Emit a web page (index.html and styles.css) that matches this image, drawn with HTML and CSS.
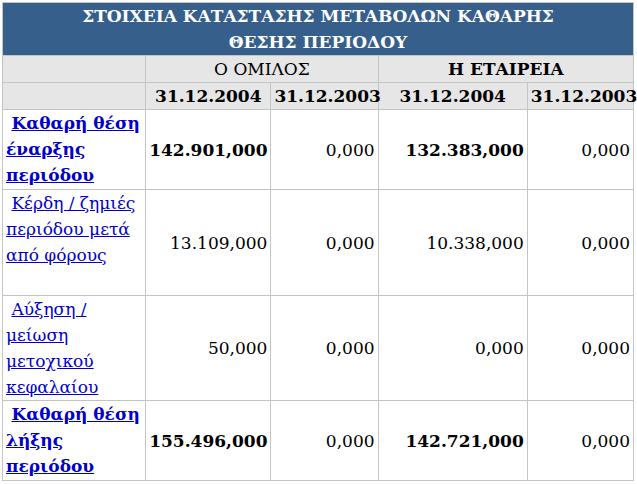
FILE: index.html
```html
<!DOCTYPE html>
<html lang="el">
<head>
<meta charset="utf-8">
<title>Κατάσταση μεταβολών</title>
<link rel="stylesheet" href="styles.css">
</head>
<body>
<table class="sheet">
  <colgroup>
    <col class="c-label">
    <col class="c-a">
    <col class="c-b">
    <col class="c-c">
    <col class="c-d">
  </colgroup>
  <tr class="title-row">
    <th colspan="5" class="title">ΣΤΟΙΧΕΙΑ ΚΑΤΑΣΤΑΣΗΣ ΜΕΤΑΒΟΛΩΝ ΚΑΘΑΡΗΣ<br>ΘΕΣΗΣ ΠΕΡΙΟΔΟΥ</th>
  </tr>
  <tr class="group-row">
    <td class="blank"></td>
    <td colspan="2" class="group">Ο ΟΜΙΛΟΣ</td>
    <td colspan="2" class="group strong">Η ΕΤΑΙΡΕΙΑ</td>
  </tr>
  <tr class="date-row">
    <td class="blank"></td>
    <td class="date">31.12.2004</td>
    <td class="date">31.12.2003</td>
    <td class="date">31.12.2004</td>
    <td class="date">31.12.2003</td>
  </tr>
  <tr class="data-row row-3">
    <td class="label">&nbsp;<a href="#" class="strong">Καθαρή θέση έναρξης περιόδου</a></td>
    <td class="num strong">142.901,000</td>
    <td class="num">0,000</td>
    <td class="num strong">132.383,000</td>
    <td class="num">0,000</td>
  </tr>
  <tr class="data-row row-4">
    <td class="label">&nbsp;<a href="#">Κέρδη / ζημιές περιόδου μετά από φόρους</a></td>
    <td class="num">13.109,000</td>
    <td class="num">0,000</td>
    <td class="num">10.338,000</td>
    <td class="num">0,000</td>
  </tr>
  <tr class="data-row row-4b">
    <td class="label">&nbsp;<a href="#">Αύξηση / μείωση μετοχικού κεφαλαίου</a></td>
    <td class="num">50,000</td>
    <td class="num">0,000</td>
    <td class="num">0,000</td>
    <td class="num">0,000</td>
  </tr>
  <tr class="data-row row-3">
    <td class="label">&nbsp;<a href="#" class="strong">Καθαρή θέση λήξης περιόδου</a></td>
    <td class="num strong">155.496,000</td>
    <td class="num">0,000</td>
    <td class="num strong">142.721,000</td>
    <td class="num">0,000</td>
  </tr>
</table>
</body>
</html>
```

FILE: styles.css
```css
html, body {
  margin: 0;
  background: #ffffff;
}

body {
  padding: 2px 0 0 2px;
  color: #000000;
  font-family: "DejaVu Serif", "Liberation Serif", serif;
}

.sheet {
  border-collapse: collapse;
  table-layout: fixed;
  width: 632px;
  border: 1px solid #c4c4c4;
}

.c-label { width: 143px; }
.c-a { width: 125px; }
.c-b { width: 107px; }
.c-c { width: 149px; }
.c-d { width: 106px; }

.sheet td, .sheet th {
  border: 1px solid #c4c4c4;
  padding: 0 3px;
  font-size: 17px;
  line-height: 26px;
}

.title {
  background: #365f8c;
  color: #ffffff;
  font-size: 18px;
  line-height: 24px;
  font-weight: bold;
  text-align: center;
  white-space: nowrap;
  height: 51px;
  padding: 2px 4px 0;
  border-color: #365f8c;
}

.group-row td, .date-row td {
  background: #e6e6e6;
  height: 26px;
}

.group {
  text-align: center;
  font-size: 18px;
}

.date {
  text-align: center;
  font-weight: bold;
  font-size: 16.5px;
  white-space: nowrap;
  padding: 0;
}

.strong { font-weight: bold; }

.row-3 { height: 80px; }
.row-4 { height: 106px; }
.row-4b { height: 104px; }

.label {
  vertical-align: top;
  padding: 0 2px 0 4px;
}

.label a {
  color: #0000cc;
  text-decoration: underline;
}

.num {
  text-align: right;
  vertical-align: middle;
  padding-right: 4px;
}
```
